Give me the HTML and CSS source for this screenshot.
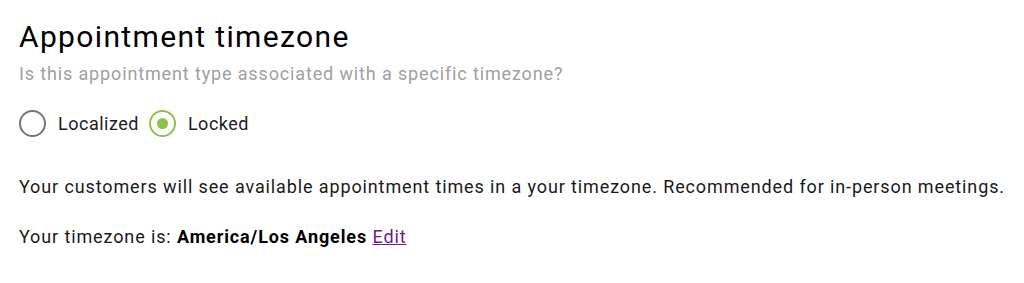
FILE: index.html
```html
<!DOCTYPE html>
<html>
<head>
<meta charset="utf-8">
<link rel="stylesheet" href="styles.css">
</head>
<body>
<div class="section">
  <h2 class="title">Appointment timezone</h2>
  <p class="subtitle">Is this appointment type associated with a specific timezone?</p>
  <div class="radios">
    <label class="radio"><span class="circle"></span><span class="label">Localized</span></label>
    <label class="radio checked"><span class="circle"><span class="dot"></span></span><span class="label">Locked</span></label>
  </div>
  <p class="text first">Your customers will see available appointment times in a your timezone. Recommended for in-person meetings.</p>
  <p class="text second">Your timezone is: <strong>America/Los Angeles</strong> <a class="edit" href="#">Edit</a></p>
</div>
</body>
</html>
```
FILE: styles.css
```css
html, body {
  margin: 0;
  padding: 0;
  background: #ffffff;
}
body {
  font-family: Roboto, "Noto Sans", sans-serif;
  color: #212121;
}
.section {
  padding: 17px 19px;
}
.title {
  margin: 0;
  font-size: 30px;
  font-weight: 400;
  line-height: 40px;
  letter-spacing: 1.35px;
  color: #000000;
}
.subtitle {
  margin: 3px 0 0;
  font-size: 18px;
  line-height: 28px;
  color: #a0a0a0;
  letter-spacing: 0.86px;
}
.radios {
  display: flex;
  align-items: center;
  gap: 10px;
  margin-top: 17px;
  height: 36px;
}
.radio {
  display: flex;
  align-items: center;
  gap: 12px;
  font-size: 18px;
  color: #212121;
  letter-spacing: 0.5px;
}
.circle {
  box-sizing: border-box;
  width: 27px;
  height: 27px;
  border: 2px solid #757575;
  border-radius: 50%;
  display: flex;
  align-items: center;
  justify-content: center;
}
.checked .circle {
  border-color: #8bc34a;
}
.dot {
  width: 11px;
  height: 11px;
  border-radius: 50%;
  background: #8bc34a;
}
.text {
  margin: 0;
  font-size: 18px;
  line-height: 28px;
  letter-spacing: 0.88px;
  color: #1a1a1a;
}
.text.first {
  margin-top: 32px;
}
.text.second {
  margin-top: 22px;
}
.text strong {
  font-weight: 700;
  color: #000;
}
.edit {
  color: #6a1b9a;
  text-decoration: underline;
}
```
